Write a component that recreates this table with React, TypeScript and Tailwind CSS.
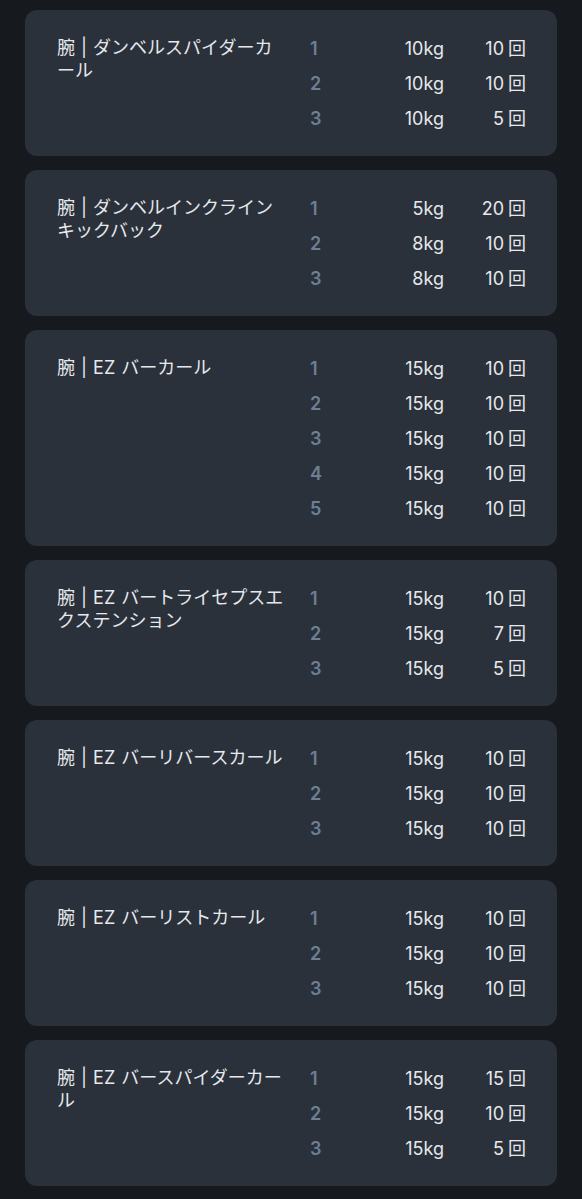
const workouts: { name: string; sets: [string, string][] }[] = [
  { name: "腕 | ダンベルスパイダーカール", sets: [["10kg", "10"], ["10kg", "10"], ["10kg", "5"]] },
  { name: "腕 | ダンベルインクラインキックバック", sets: [["5kg", "20"], ["8kg", "10"], ["8kg", "10"]] },
  {
    name: "腕 | EZ バーカール",
    sets: [["15kg", "10"], ["15kg", "10"], ["15kg", "10"], ["15kg", "10"], ["15kg", "10"]],
  },
  { name: "腕 | EZ バートライセプスエクステンション", sets: [["15kg", "10"], ["15kg", "7"], ["15kg", "5"]] },
  { name: "腕 | EZ バーリバースカール", sets: [["15kg", "10"], ["15kg", "10"], ["15kg", "10"]] },
  { name: "腕 | EZ バーリストカール", sets: [["15kg", "10"], ["15kg", "10"], ["15kg", "10"]] },
  { name: "腕 | EZ バースパイダーカール", sets: [["15kg", "15"], ["15kg", "10"], ["15kg", "5"]] },
];

function WorkoutCard({ name, sets }: { name: string; sets: [string, string][] }) {
  return (
    <div className="flex items-start rounded-xl bg-[#2a313b] pl-8 pr-[31px] py-[20.5px]">
      <div className="w-[230px] shrink-0 pt-[5px] text-[18px] leading-[23px] text-[#e6e8eb] [word-spacing:1px]">
        {name}
      </div>
      <div className="ml-[23px] flex-1">
        {sets.map(([weight, reps], i) => (
          <div key={i} className="grid h-[35px] grid-cols-[40px_1fr_82px] items-center text-[18px]">
            <span className="font-semibold text-[#6d7f95]">{i + 1}</span>
            <span className="text-right text-[#e6e8eb]">{weight}</span>
            <span className="text-right text-[#e6e8eb]">
              {reps}
              <span className="ml-1">回</span>
            </span>
          </div>
        ))}
      </div>
    </div>
  );
}

export default function App() {
  return (
    <div
      className="min-h-screen bg-[#161a1f] px-[25px] pt-[10px] pb-4"
      style={{ fontFamily: 'Inter, "Noto Sans CJK JP", sans-serif' }}
    >
      <div className="flex flex-col gap-[14px]">
        {workouts.map((w, i) => (
          <WorkoutCard key={i} name={w.name} sets={w.sets} />
        ))}
      </div>
    </div>
  );
}
